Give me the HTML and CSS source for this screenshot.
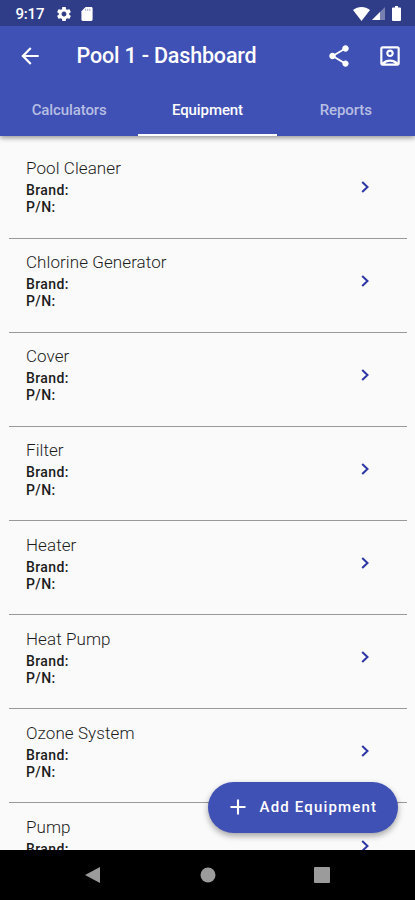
FILE: index.html
```html
<!DOCTYPE html>
<html lang="en">
<head>
<meta charset="utf-8">
<title>Pool 1 - Dashboard</title>
<link rel="stylesheet" href="styles.css">
</head>
<body>
<div class="screen">
  <header class="top">
    <div class="status">
      <span class="clock">9:17</span>
      <svg class="gear" viewBox="2 2 20 20"><path d="M19.43 12.98c.04-.32.07-.64.07-.98s-.03-.66-.07-.98l2.11-1.65c.19-.15.24-.42.12-.64l-2-3.46c-.12-.22-.39-.3-.61-.22l-2.49 1c-.52-.4-1.08-.73-1.69-.98l-.38-2.65C14.46 2.18 14.25 2 14 2h-4c-.25 0-.46.18-.49.42l-.38 2.65c-.61.25-1.17.59-1.69.98l-2.49-1c-.23-.09-.49 0-.61.22l-2 3.46c-.13.22-.07.49.12.64l2.11 1.65c-.04.32-.07.65-.07.98s.03.66.07.98l-2.11 1.65c-.19.15-.24.42-.12.64l2 3.46c.12.22.39.3.61.22l2.49-1c.52.4 1.08.73 1.69.98l.38 2.65c.03.24.24.42.49.42h4c.25 0 .46-.18.49-.42l.38-2.65c.61-.25 1.17-.59 1.69-.98l2.49 1c.23.09.49 0 .61-.22l2-3.46c.12-.22.07-.49-.12-.64l-2.11-1.65zM12 15.5c-1.93 0-3.5-1.57-3.5-3.5s1.57-3.5 3.5-3.5 3.5 1.57 3.5 3.5-1.57 3.5-3.5 3.5z"/></svg>
      <svg class="card" viewBox="4 2 16 20"><path d="M18 2h-8L4 8v12c0 1.100.9 2 2 2h12c1.100 0 2-.9 2-2V4c0-1.100-.9-2-2-2z"/><path class="slots" d="M10 4.500v3M13 4.500v3M16 4.500v3"/></svg>
      <svg class="wifi" viewBox="0 0 17 14"><path d="M0 3C5-1 12-1 17 3L8.500 14z"/></svg>
      <svg class="signal" viewBox="0 0 13 13"><path class="dim" d="M13 0v13H0z"/><path d="M8 5v8H0z"/></svg>
      <svg class="battery" viewBox="0 0 9 15"><path d="M3 0h3v1.500h2q1 0 1 1V14q0 1-1 1H1q-1 0-1-1V2.500q0-1 1-1h2z"/></svg>
    </div>
    <div class="bar">
      <svg class="icon" viewBox="0 0 24 24"><path d="M20 11H7.830l5.590-5.590L12 4l-8 8 8 8 1.410-1.410L7.830 13H20v-2z"/></svg>
      <h1>Pool 1 - Dashboard</h1>
      <svg class="icon share" viewBox="0 0 24 24"><path d="M18 16.080c-.76 0-1.440.3-1.960.77L8.910 12.700c.05-.23.09-.46.09-.7s-.04-.47-.09-.7l7.050-4.110c.54.5 1.250.81 2.040.81 1.660 0 3-1.340 3-3s-1.340-3-3-3-3 1.340-3 3c0 .24.04.47.09.7L8.040 9.810C7.500 9.310 6.790 9 6 9c-1.660 0-3 1.340-3 3s1.340 3 3 3c.79 0 1.500-.31 2.040-.81l7.120 4.160c-.05.21-.08.43-.08.65 0 1.610 1.310 2.920 2.920 2.920s2.920-1.310 2.920-2.920-1.310-2.920-2.920-2.920z"/></svg>
      <svg class="icon" viewBox="0 0 24 24"><path fill-rule="evenodd" d="M19 3H5c-1.110 0-2 .9-2 2v14c0 1.100.89 2 2 2h14c1.100 0 2-.9 2-2V5c0-1.100-.9-2-2-2zM7.500 19c.9-1.050 2.600-1.700 4.500-1.700s3.600.65 4.500 1.700zM19 18c-1.450-1.760-4.300-2.700-7-2.700S6.450 16.240 5 18V5h14zM12 13c1.930 0 3.500-1.570 3.500-3.500S13.930 6 12 6 8.500 7.570 8.500 9.500 10.070 13 12 13zm0-5c.83 0 1.500.67 1.500 1.500S12.830 11 12 11s-1.500-.67-1.500-1.500S11.170 8 12 8z"/></svg>
    </div>
    <nav class="tabs">
      <span class="tab">Calculators</span>
      <span class="tab active">Equipment</span>
      <span class="tab">Reports</span>
    </nav>
  </header>
  <main class="list">
    <section class="row"><div><h2>Pool Cleaner</h2><p>Brand:</p><p>P/N:</p></div><svg class="chev" viewBox="0 0 8 12"><path d="M1.200 1L6.500 6 1.200 11"/></svg></section>
    <section class="row"><div><h2>Chlorine Generator</h2><p>Brand:</p><p>P/N:</p></div><svg class="chev" viewBox="0 0 8 12"><path d="M1.200 1L6.500 6 1.200 11"/></svg></section>
    <section class="row"><div><h2>Cover</h2><p>Brand:</p><p>P/N:</p></div><svg class="chev" viewBox="0 0 8 12"><path d="M1.200 1L6.500 6 1.200 11"/></svg></section>
    <section class="row"><div><h2>Filter</h2><p>Brand:</p><p>P/N:</p></div><svg class="chev" viewBox="0 0 8 12"><path d="M1.200 1L6.500 6 1.200 11"/></svg></section>
    <section class="row"><div><h2>Heater</h2><p>Brand:</p><p>P/N:</p></div><svg class="chev" viewBox="0 0 8 12"><path d="M1.200 1L6.500 6 1.200 11"/></svg></section>
    <section class="row"><div><h2>Heat Pump</h2><p>Brand:</p><p>P/N:</p></div><svg class="chev" viewBox="0 0 8 12"><path d="M1.200 1L6.500 6 1.200 11"/></svg></section>
    <section class="row"><div><h2>Ozone System</h2><p>Brand:</p><p>P/N:</p></div><svg class="chev" viewBox="0 0 8 12"><path d="M1.200 1L6.500 6 1.200 11"/></svg></section>
    <section class="row"><div><h2>Pump</h2><p>Brand:</p></div><svg class="chev" viewBox="0 0 8 12"><path d="M1.200 1L6.500 6 1.200 11"/></svg></section>
  </main>
  <button class="fab"><svg viewBox="0 0 16 16"><path d="M8 .5v15M.5 8h15"/></svg><span>Add Equipment</span></button>
  <footer class="nav">
    <svg viewBox="0 0 16 18"><path d="M15 1v16L0 9z"/></svg>
    <svg viewBox="0 0 16 18"><circle cx="8" cy="9" r="7.500"/></svg>
    <svg viewBox="0 0 16 18"><rect x="0" y="1" width="16" height="16" rx="1"/></svg>
  </footer>
</div>
</body>
</html>
```
FILE: styles.css
```css
* { box-sizing: border-box; }
body { margin: 0; font-family: Roboto, sans-serif; background: #fafafa; }
h1, h2, p { margin: 0; }
svg { display: block; flex: none; }
.screen { position: relative; width: 415px; height: 900px; overflow: hidden; display: flex; flex-direction: column; }
.top { position: relative; flex: none; height: 136px; background: #3f51b5; color: #fff; box-shadow: 0 2px 5px rgba(0,0,0,.4); }
.top svg { fill: #fff; }
.status { height: 25.500px; background: #2f3d88; display: flex; align-items: center; padding: 2px 14.500px 0 15.500px; }
.clock { font-size: 15px; font-weight: 500; width: 41px; letter-spacing: -.2px; }
.gear { width: 14px; height: 14px; }
.card { width: 12px; height: 14px; margin-left: 10.500px; }
.card .slots { stroke: #8d96c4; stroke-width: 1.200; }
.wifi { width: 17px; height: 14px; margin-left: auto; }
.signal { width: 13px; height: 13px; margin-left: 2px; }
.signal .dim { opacity: .35; }
.battery { width: 9px; height: 15px; margin-left: 7px; }
.bar { height: 60px; display: flex; align-items: center; padding: 0 12px 0 17px; }
.icon { width: 26px; height: 26px; }
.bar h1 { font-size: 21.500px; font-weight: 500; line-height: 28px; margin-left: 33.500px; letter-spacing: -.17px; white-space: nowrap; padding-top: 1px; }
.share { margin-left: auto; margin-right: 25px; }
.tabs { display: flex; height: 50.500px; }
.tab { flex: 1; text-align: center; font-size: 15px; font-weight: 500; line-height: 48px; letter-spacing: -.1px; color: #b7bee3; border-bottom: 2px solid transparent; }
.tab.active { color: #fff; border-color: #fff; }
.list { flex: 1; min-height: 0; overflow: hidden; padding: 8.500px 8.500px 0 9px; }
.row { height: 94.150px; border-bottom: 1px solid #999; display: flex; justify-content: space-between; padding: 13.500px 37.500px 0 17px; }
.row h2 { font-size: 17px; font-weight: 300; line-height: 21px; color: #1c1c1c; letter-spacing: .08px; }
.row p { font-size: 14px; font-weight: 500; line-height: 17.200px; color: #1c1c1c; letter-spacing: .4px; }
.row h2 + p { margin-top: 3px; }
.chev { width: 8px; height: 12px; margin-top: 22.600px; fill: none; stroke: #2c37a5; stroke-width: 2; }
.fab { position: absolute; left: 208px; top: 782px; width: 190px; height: 50.500px; border: 0; border-radius: 26px; background: #3f51b5; color: #fff; display: flex; align-items: center; padding: 0 0 0 22px; font: 500 15px Roboto, sans-serif; letter-spacing: 1.180px; white-space: nowrap; box-shadow: 0 3px 6px rgba(0,0,0,.35); }
.fab svg { width: 16px; height: 16px; margin-right: 13.500px; fill: none; stroke: #fff; stroke-width: 2.100; }
.nav { flex: none; height: 50px; background: #000; display: flex; justify-content: space-between; align-items: center; padding: 0 85px; }
.nav svg { width: 16px; height: 18px; fill: #9b9b9b; }
```
